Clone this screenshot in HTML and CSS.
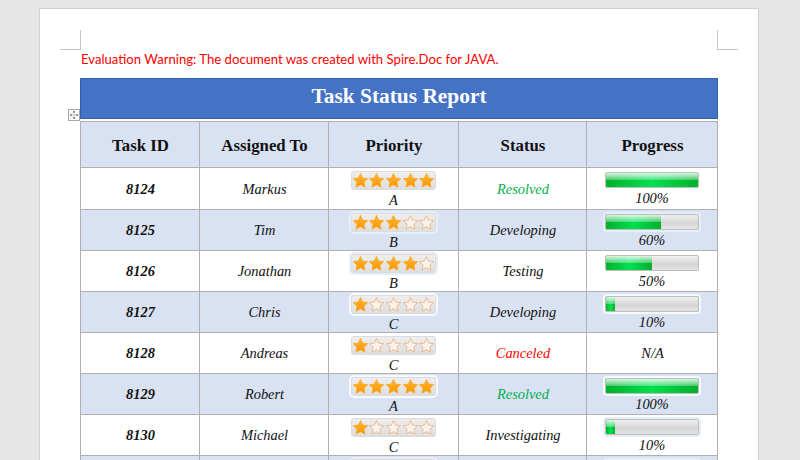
FILE: index.html
```html
<!DOCTYPE html>
<html lang="en">
<head>
<meta charset="utf-8">
<title>Task Status Report</title>
<link rel="stylesheet" href="styles.css">
</head>
<body>
<svg class="defs" aria-hidden="true">
  <defs>
    <linearGradient id="gold" x1="0" y1="0" x2="0" y2="1">
      <stop offset="0" stop-color="#ffb838"/>
      <stop offset="1" stop-color="#fb9400"/>
    </linearGradient>
    <symbol id="s" viewBox="0 0 14 14">
      <path d="M7 .5L9 4.75l4.66.59-3.43 3.21.88 4.61L7 10.9l-4.11 2.26.88-4.61L.34 5.34 5 4.75z"/>
    </symbol>
  </defs>
</svg>
<main class="page">
  <span class="crop crop-l"></span>
  <span class="crop crop-r"></span>
  <p class="warning">Evaluation Warning: The document was created with Spire.Doc for JAVA.</p>
  <div class="report">
    <span class="handle">
      <svg viewBox="0 0 10 10"><path d="M5 0v10M0 5h10M5 0L3.6 1.6h2.8zM5 10L3.6 8.4h2.8zM0 5l1.6-1.4v2.8zM10 5L8.4 3.6v2.8z"/></svg>
    </span>
    <h1 class="title">Task Status Report</h1>
    <table class="tasks">
      <colgroup><col class="c1"><col class="c2"><col class="c3"><col class="c4"><col class="c5"></colgroup>
      <thead>
        <tr class="alt head"><th>Task ID</th><th>Assigned To</th><th>Priority</th><th>Status</th><th>Progress</th></tr>
      </thead>
      <tbody>
        <tr>
          <td class="id">8124</td><td>Markus</td>
          <td class="w"><div class="rating"><svg class="star on"><use href="#s"/></svg><svg class="star on"><use href="#s"/></svg><svg class="star on"><use href="#s"/></svg><svg class="star on"><use href="#s"/></svg><svg class="star on"><use href="#s"/></svg></div><div class="cap">A</div></td>
          <td class="ok">Resolved</td>
          <td class="w"><div class="bar"><div class="fill" style="width:100%"></div></div><div class="cap">100%</div></td>
        </tr>
        <tr class="alt">
          <td class="id">8125</td><td>Tim</td>
          <td class="w"><div class="rating halo-blue"><svg class="star on"><use href="#s"/></svg><svg class="star on"><use href="#s"/></svg><svg class="star on"><use href="#s"/></svg><svg class="star"><use href="#s"/></svg><svg class="star"><use href="#s"/></svg></div><div class="cap">B</div></td>
          <td>Developing</td>
          <td class="w"><div class="bar halo-blue"><div class="fill" style="width:60%"></div></div><div class="cap">60%</div></td>
        </tr>
        <tr>
          <td class="id">8126</td><td>Jonathan</td>
          <td class="w"><div class="rating halo-blue"><svg class="star on"><use href="#s"/></svg><svg class="star on"><use href="#s"/></svg><svg class="star on"><use href="#s"/></svg><svg class="star on"><use href="#s"/></svg><svg class="star"><use href="#s"/></svg></div><div class="cap">B</div></td>
          <td>Testing</td>
          <td class="w"><div class="bar"><div class="fill" style="width:50%"></div></div><div class="cap">50%</div></td>
        </tr>
        <tr class="alt">
          <td class="id">8127</td><td>Chris</td>
          <td class="w"><div class="rating halo-white"><svg class="star on"><use href="#s"/></svg><svg class="star"><use href="#s"/></svg><svg class="star"><use href="#s"/></svg><svg class="star"><use href="#s"/></svg><svg class="star"><use href="#s"/></svg></div><div class="cap">C</div></td>
          <td>Developing</td>
          <td class="w"><div class="bar halo-white"><div class="fill" style="width:10%"></div></div><div class="cap">10%</div></td>
        </tr>
        <tr>
          <td class="id">8128</td><td>Andreas</td>
          <td class="w"><div class="rating"><svg class="star on"><use href="#s"/></svg><svg class="star"><use href="#s"/></svg><svg class="star"><use href="#s"/></svg><svg class="star"><use href="#s"/></svg><svg class="star"><use href="#s"/></svg></div><div class="cap">C</div></td>
          <td class="bad">Canceled</td>
          <td>N/A</td>
        </tr>
        <tr class="alt">
          <td class="id">8129</td><td>Robert</td>
          <td class="w"><div class="rating halo-white"><svg class="star on"><use href="#s"/></svg><svg class="star on"><use href="#s"/></svg><svg class="star on"><use href="#s"/></svg><svg class="star on"><use href="#s"/></svg><svg class="star on"><use href="#s"/></svg></div><div class="cap">A</div></td>
          <td class="ok">Resolved</td>
          <td class="w"><div class="bar halo-white"><div class="fill" style="width:100%"></div></div><div class="cap">100%</div></td>
        </tr>
        <tr>
          <td class="id">8130</td><td>Michael</td>
          <td class="w"><div class="rating"><svg class="star on"><use href="#s"/></svg><svg class="star"><use href="#s"/></svg><svg class="star"><use href="#s"/></svg><svg class="star"><use href="#s"/></svg><svg class="star"><use href="#s"/></svg></div><div class="cap">C</div></td>
          <td>Investigating</td>
          <td class="w"><div class="bar halo-blue"><div class="fill" style="width:10%"></div></div><div class="cap">10%</div></td>
        </tr>
        <tr class="alt">
          <td></td><td></td>
          <td class="w"><div class="rating halo-blue"></div></td>
          <td></td>
          <td class="w"><div class="bar halo-blue"></div></td>
        </tr>
      </tbody>
    </table>
  </div>
</main>
</body>
</html>
```
FILE: styles.css
```css
html, body {
  margin: 0;
  height: 460px;
  overflow: hidden;
  background: #e6e6e6;
}

.defs {
  display: block;
  width: 0;
  height: 0;
}

.page {
  position: relative;
  box-sizing: border-box;
  width: 720px;
  height: 452px;
  margin: 8px 0 0 39px;
  padding: 42px 40px 0;
  background: #fff;
  border: 1px solid #d0d0d0;
  border-bottom: 0;
  overflow: hidden;
}

.crop {
  position: absolute;
  top: 21px;
  width: 20px;
  height: 19px;
  border-bottom: 1px solid #c6c6c6;
}

.crop-l {
  left: 20px;
  border-right: 1px solid #c6c6c6;
}

.crop-r {
  right: 20px;
  border-left: 1px solid #c6c6c6;
}

.warning {
  margin: 0 0 10px 1px;
  height: 17px;
  font: 13.14px/17px "Lato", sans-serif;
  color: #ff0000;
}

.report {
  position: relative;
  width: 638px;
}

.handle {
  position: absolute;
  left: -12px;
  top: 31px;
  box-sizing: border-box;
  width: 12px;
  height: 12px;
  padding: 1px;
  background: #fff;
  border: 1px solid #a8a8a8;
  display: flex;
}

.handle svg {
  width: 100%;
  height: 100%;
}

.handle path {
  fill: #555;
  stroke: #555;
  stroke-width: .4;
}

.title {
  box-sizing: border-box;
  height: 41px;
  margin: 0 0 2px;
  background: #4472c4;
  border: 1px solid #2f5fae;
  color: #fff;
  font: bold 21.4px/35px "Liberation Serif", serif;
  text-align: center;
}

.tasks {
  width: 637px;
  table-layout: fixed;
  border-collapse: collapse;
  font: italic 14.4px/16px "Liberation Serif", serif;
  color: #111;
  text-align: center;
}

.c1 { width: 119px; }
.c2 { width: 129px; }
.c3 { width: 130px; }
.c4 { width: 128px; }
.c5 { width: 131px; }

.tasks th,
.tasks td {
  box-sizing: border-box;
  padding: 0 0 0 1px;
  border: 1px solid #b0b0b0;
  height: 41px;
  vertical-align: middle;
}

.tasks .head th {
  height: 46px;
  padding-top: 2px;
  font: bold 16.8px/18px "Liberation Serif", serif;
}

.tasks tbody tr:first-child td {
  height: 42px;
}

.tasks .w {
  vertical-align: top;
  padding: 3px 0 0;
}

.alt {
  background: #d9e2f3;
}

.id {
  font-weight: bold;
}

.ok {
  color: #00b050;
}

.bad {
  color: #ff0000;
}

.rating,
.bar {
  box-sizing: border-box;
  margin: 0 auto;
}

.rating {
  display: flex;
  gap: 1.6px;
  justify-content: center;
  align-items: center;
  width: 85px;
  height: 19px;
  margin-bottom: 3px;
  background: linear-gradient(#eeeeee, #dedede);
  border: 1px solid #dcdcdc;
  border-radius: 3px;
}

.bar {
  width: 94px;
  height: 16px;
  margin-top: 1px;
  margin-bottom: 3px;
  background: linear-gradient(#f0f0f0, #dcdcdc 45%, #d4d4d4 55%, #e4e4e4);
  border: 1px solid #b8c0b8;
  border-radius: 2px;
  overflow: hidden;
}

.fill {
  height: 100%;
  background:
    linear-gradient(rgba(255, 255, 255, .85), rgba(255, 255, 255, .3) 48%, transparent 50%),
    linear-gradient(90deg, #00b02c, #00e050 50%, #00b02c);
}

.halo-blue {
  box-shadow: 0 0 0 2px #e6eff9;
}

.halo-white {
  box-shadow: 0 0 0 2px #f6f9fd;
}

.star {
  width: 15px;
  height: 15px;
  fill: #f6f2ee;
  stroke: #f0b07a;
  stroke-width: .8;
  stroke-linejoin: round;
}

.star.on {
  fill: url(#gold);
  stroke: #fda820;
}

.cap {
  line-height: 15px;
}
```
